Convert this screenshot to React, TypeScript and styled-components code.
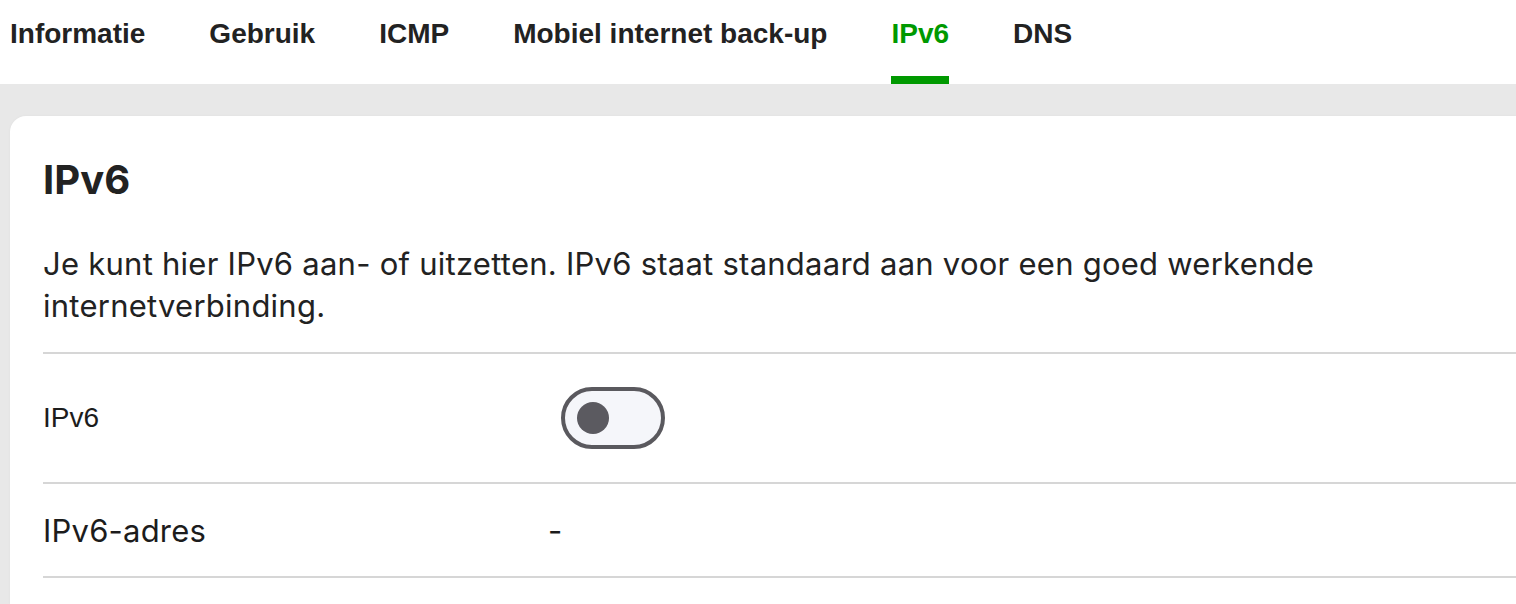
import React, { useState } from 'react';
import styled, { createGlobalStyle } from 'styled-components';

const green = '#009900';
const ink = '#222222';
const line = '#d6d6d6';

const GlobalStyle = createGlobalStyle`
    html, body {
        margin: 0;
        padding: 0;
        background: #e8e8e8;
        color: ${ink};
        font-family: Inter, "Noto Sans", sans-serif;
        -webkit-font-smoothing: antialiased;
    }
    * {
        box-sizing: border-box;
    }
`;

const StyledPage = styled.div`
    height: 604px;
    display: flex;
    flex-direction: column;
    overflow: hidden;
`;

const StyledTabBar = styled.nav`
    height: 84px;
    flex-shrink: 0;
    background: #ffffff;
    display: flex;
    gap: 64px;
    padding-left: 10px;
`;

const StyledTab = styled.a<{ $active?: boolean }>`
    height: 84px;
    padding-top: 17px;
    font-family: "Liberation Sans", Arial, sans-serif;
    font-weight: 700;
    font-size: 28px;
    line-height: 34px;
    color: ${({ $active }) => ($active ? green : ink)};
    border-bottom: 8px solid ${({ $active }) => ($active ? green : 'transparent')};
    white-space: nowrap;
    cursor: pointer;
    text-decoration: none;
`;

const StyledMain = styled.main`
    flex: 1;
    padding: 32px 0 0 10px;
`;

const StyledCard = styled.section`
    background: #ffffff;
    border-radius: 16px 0 0 0;
    padding: 40px 0 0 33px;
    height: 100%;
    box-shadow: 0 0 3px rgba(0, 0, 0, 0.04);
`;

const StyledTitle = styled.h1`
    margin: 0;
    font-family: Inter, sans-serif;
    font-weight: 700;
    font-size: 40px;
    line-height: 48px;
    color: ${ink};
`;

const StyledIntro = styled.p`
    margin: 39px 0 25px;
    max-width: 1320px;
    font-size: 31px;
    line-height: 42px;
    letter-spacing: 0.25px;
    color: ${ink};
`;

const StyledList = styled.div`
    border-top: 2px solid ${line};
`;

const StyledRow = styled.div<{ $height: number }>`
    height: ${({ $height }) => $height}px;
    display: grid;
    grid-template-columns: 505px 1fr;
    align-items: center;
    border-bottom: 2px solid ${line};
`;

const StyledLabel = styled.label<{ $system?: boolean }>`
    font-family: ${({ $system }) => ($system ? '"Liberation Sans", Arial, sans-serif' : 'Inter, sans-serif')};
    font-size: ${({ $system }) => ($system ? 28 : 31)}px;
    letter-spacing: ${({ $system }) => ($system ? 0 : 0.2)}px;
    color: #1c1c1c;
`;

const StyledValue = styled.span`
    font-size: 31px;
    color: #1c1c1c;
`;

const StyledSwitch = styled.button<{ $on: boolean }>`
    margin-left: 13px;
    width: 104px;
    height: 62px;
    padding: 0 12px;
    border: 4px solid #5a595e;
    border-radius: 31px;
    background: ${({ $on }) => ($on ? green : '#f5f6fa')};
    display: flex;
    align-items: center;
    justify-content: ${({ $on }) => ($on ? 'flex-end' : 'flex-start')};
    cursor: pointer;
`;

const StyledKnob = styled.span<{ $on: boolean }>`
    width: 32px;
    height: 32px;
    border-radius: 50%;
    background: ${({ $on }) => ($on ? '#ffffff' : '#5b5a60')};
`;

const tabs = ['Informatie', 'Gebruik', 'ICMP', 'Mobiel internet back-up', 'IPv6', 'DNS'];

export default function App() {
    const [ipv6, setIpv6] = useState(false);

    return (
        <>
            <GlobalStyle />
            <StyledPage>
                <StyledTabBar>
                    {tabs.map((tab) => (
                        <StyledTab key={tab} $active={tab === 'IPv6'}>
                            {tab}
                        </StyledTab>
                    ))}
                </StyledTabBar>
                <StyledMain>
                    <StyledCard>
                        <StyledTitle>IPv6</StyledTitle>
                        <StyledIntro>
                            Je kunt hier IPv6 aan- of uitzetten. IPv6 staat standaard aan voor een goed werkende
                            internetverbinding.
                        </StyledIntro>
                        <StyledList>
                            <StyledRow $height={130}>
                                <StyledLabel $system htmlFor="ipv6-switch">
                                    IPv6
                                </StyledLabel>
                                <div>
                                    <StyledSwitch
                                        id="ipv6-switch"
                                        role="switch"
                                        aria-checked={ipv6}
                                        $on={ipv6}
                                        onClick={() => setIpv6(!ipv6)}
                                    >
                                        <StyledKnob $on={ipv6} />
                                    </StyledSwitch>
                                </div>
                            </StyledRow>
                            <StyledRow $height={94}>
                                <StyledLabel>IPv6-adres</StyledLabel>
                                <StyledValue>-</StyledValue>
                            </StyledRow>
                        </StyledList>
                    </StyledCard>
                </StyledMain>
            </StyledPage>
        </>
    );
}
